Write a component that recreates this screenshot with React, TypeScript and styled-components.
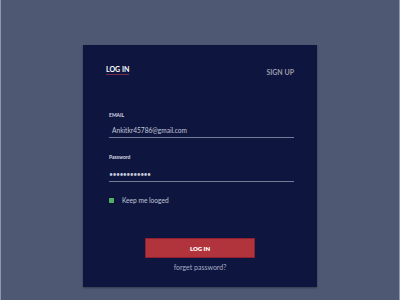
import React from "react";
import styled, { createGlobalStyle } from "styled-components";

const Global = createGlobalStyle`
  html, body { margin: 0; padding: 0; }
  body {
    width: 400px; height: 300px; overflow: hidden;
    background: #4f5873;
    font-family: "Open Sans", "Liberation Sans", sans-serif;
  }
`;

const Page = styled.div`
  box-sizing: border-box;
  width: 400px;
  height: 300px;
  border-left: 1px solid #8e96b0;
  border-right: 1px solid #8e96b0;
  padding-top: 45px;
  display: flex;
  justify-content: center;
`;

const Card = styled.div`
  box-sizing: border-box;
  width: 234px;
  height: 242px;
  background: #0e1640;
  box-shadow: 0 1px 2px rgba(0, 0, 0, 0.35);
  padding: 19px 23px 0 26px;
  display: flex;
  flex-direction: column;
`;

const Tabs = styled.div`
  display: flex;
  justify-content: space-between;
  align-items: flex-start;
  height: 48px;
`;

const Tab = styled.div<{ $active?: boolean }>`
  font-family: "Lato", "Liberation Sans", sans-serif;
  font-weight: 700;
  font-size: 7px;
  color: ${(p) => (p.$active ? "#ffffff" : "#9c9aa8")};
  margin-top: ${(p) => (p.$active ? "1px" : "4px")};
  margin-left: ${(p) => (p.$active ? "-3px" : "0")};
  padding-bottom: 1px;
  border-bottom: ${(p) => (p.$active ? "1px solid #7a2e4c" : "none")};
  line-height: 8px;
`;

const Field = styled.div`
  display: flex;
  flex-direction: column;
  margin-bottom: 16px;
`;

const Label = styled.div`
  font-family: "Lato", "Liberation Sans", sans-serif;
  font-weight: 700;
  font-size: 5px;
  color: #d8dae4;
  line-height: 6px;
  margin-bottom: 8px;
`;

const Value = styled.div<{ $dots?: boolean }>`
  font-family: "Lato", "Liberation Sans", sans-serif;
  font-size: ${(p) => (p.$dots ? "7px" : "6.6px")};
  color: #c2c6d6;
  line-height: 9px;
  margin-top: ${(p) => (p.$dots ? "2px" : "0")};
  padding-left: ${(p) => (p.$dots ? "0" : "3px")};
  padding-bottom: 2px;
  border-bottom: 1px solid #737b96;
  letter-spacing: ${(p) => (p.$dots ? "-0.6px" : "0")};
`;

const CheckRow = styled.div`
  display: flex;
  align-items: center;
  gap: 7px;
  margin-top: -2px;
`;

const Box = styled.div`
  box-sizing: border-box;
  width: 7px;
  height: 7px;
  background: #4fae6c;
  border: 1px solid #0a1030;
  margin-left: -1px;
`;

const CheckText = styled.div`
  font-family: "Lato", "Liberation Sans", sans-serif;
  font-size: 6.6px;
  color: #c2c6d6;
`;

const Actions = styled.div`
  margin-top: 34px;
  margin-left: -3px;
  display: flex;
  flex-direction: column;
  align-items: center;
  gap: 5px;
`;

const Button = styled.button`
  box-sizing: border-box;
  width: 110px;
  height: 20px;
  background: #b1333b;
  border: 1px solid #8c2030;
  color: #fff;
  font-family: "Lato", "Liberation Sans", sans-serif;
  font-weight: 800;
  font-size: 6px;
  padding: 0;
  cursor: pointer;
`;

const Link = styled.div`
  font-family: "Lato", "Liberation Sans", sans-serif;
  font-size: 7px;
  color: #a7abc0;
`;

export default function App() {
  return (
    <>
      <Global />
      <Page>
        <Card>
          <Tabs>
            <Tab $active>LOG IN</Tab>
            <Tab>SIGN UP</Tab>
          </Tabs>
          <Field>
            <Label>EMAIL</Label>
            <Value>Ankitkr45786@gmail.com</Value>
          </Field>
          <Field>
            <Label>Password</Label>
            <Value $dots>••••••••••••</Value>
          </Field>
          <CheckRow>
            <Box />
            <CheckText>Keep me looged</CheckText>
          </CheckRow>
          <Actions>
            <Button>LOG IN</Button>
            <Link>forget password?</Link>
          </Actions>
        </Card>
      </Page>
    </>
  );
}
